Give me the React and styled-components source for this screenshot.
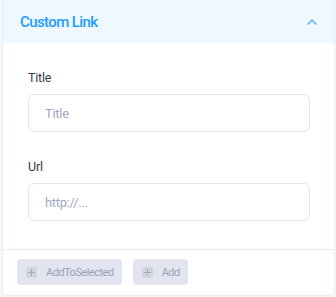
import styled, { createGlobalStyle } from "styled-components";

const GlobalStyle = createGlobalStyle`
  body {
    margin: 0;
    background: #f5f7fb;
    font-family: Roboto, "Liberation Sans", sans-serif;
  }
`;

const Page = styled.div`
  padding: 0 1px 3px 2px;
`;

const Card = styled.div`
  background: #fff;
  border: 1px solid #e9edf4;
  border-top: none;
  border-radius: 0 0 5px 5px;
  overflow: hidden;
`;

const Header = styled.div`
  height: 43px;
  display: flex;
  align-items: center;
  justify-content: space-between;
  padding: 0 16px 0 17px;
  background: #eff8ff;
`;

const HeaderTitle = styled.div`
  font-size: 15px;
  font-weight: 500;
  letter-spacing: -0.6px;
  color: #1e9bff;
`;

const Body = styled.div`
  padding: 26px 24px 28px 25px;
  display: flex;
  flex-direction: column;
  gap: 26px;
  border-bottom: 1px solid #e9edf4;
`;

const Field = styled.div`
  display: flex;
  flex-direction: column;
  gap: 7px;
`;

const Label = styled.label`
  font-size: 12.5px;
  letter-spacing: -0.2px;
  line-height: 18px;
  color: #343a4a;
`;

const Input = styled.input`
  box-sizing: border-box;
  height: 38px;
  width: 100%;
  border: 1px solid #e2e4f0;
  border-radius: 6px;
  padding: 0 16px;
  font-family: inherit;
  font-size: 13px;
  letter-spacing: -0.3px;
  outline: none;
  &::placeholder {
    color: #a2a8c2;
  }
`;

const Footer = styled.div`
  display: flex;
  gap: 11px;
  padding: 9px 14px 10px;
`;

const Button = styled.button`
  display: flex;
  align-items: center;
  gap: 9px;
  height: 26px;
  padding: 0 8px 0 9px;
  border: none;
  border-radius: 4px;
  background: #e2e5ef;
  color: #9ca1b6;
  font-family: inherit;
  font-size: 11px;
  letter-spacing: -0.5px;
`;

const PlusBox = styled.span`
  width: 11px;
  height: 11px;
  border-radius: 2px;
  background: #d2d5e0;
  display: flex;
  align-items: center;
  justify-content: center;
`;

const Plus = () => (
  <PlusBox>
    <svg width="9" height="9" viewBox="0 0 9 9">
      <path d="M4.5 1v7M1 4.5h7" stroke="#a3a8bb" strokeWidth="1" />
    </svg>
  </PlusBox>
);

const Chevron = () => (
  <svg width="12" height="8" viewBox="0 0 12 8">
    <path d="M1.5 6.5L6 2l4.5 4.5" fill="none" stroke="#3aa9ff" strokeWidth="1.2" />
  </svg>
);

export default function App() {
  return (
    <Page>
      <GlobalStyle />
      <Card>
        <Header>
          <HeaderTitle>Custom Link</HeaderTitle>
          <Chevron />
        </Header>
        <Body>
          <Field>
            <Label>Title</Label>
            <Input placeholder="Title" />
          </Field>
          <Field>
            <Label>Url</Label>
            <Input placeholder="http://..." />
          </Field>
        </Body>
        <Footer>
          <Button>
            <Plus />
            AddToSelected
          </Button>
          <Button>
            <Plus />
            Add
          </Button>
        </Footer>
      </Card>
    </Page>
  );
}
